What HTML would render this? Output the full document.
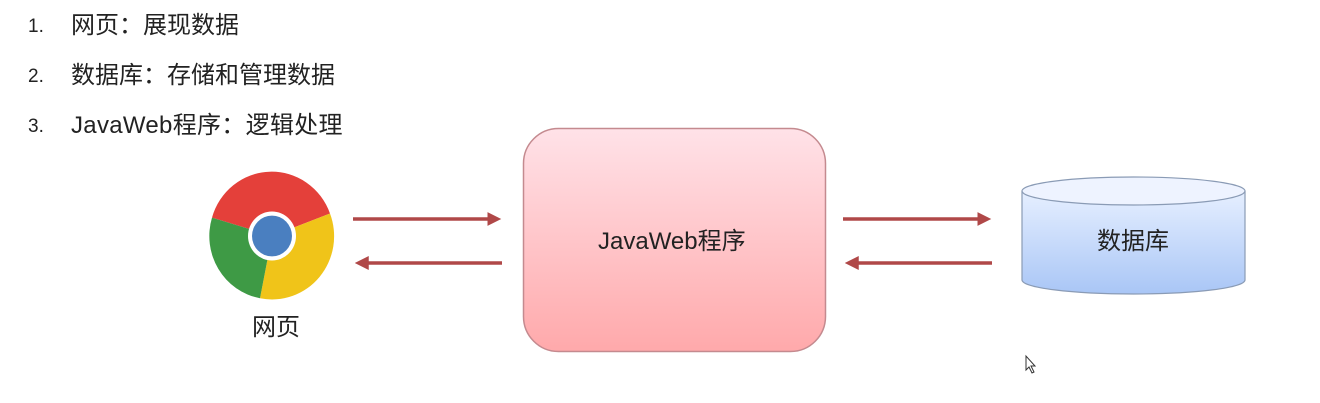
<!DOCTYPE html>
<html><head><meta charset="utf-8"><style>
body{margin:0;width:1320px;height:403px;background:#fff;overflow:hidden;position:relative;font-family:"Liberation Sans","Noto Sans CJK SC",sans-serif;color:#222}
.t{position:absolute;font-size:24px;line-height:28px;white-space:nowrap}
</style></head><body>
<div class="t" style="left:28px;top:13px;font-size:19px">1.</div>
<div class="t" style="left:71px;top:12px">网页：展现数据</div>
<div class="t" style="left:28px;top:63px;font-size:19px">2.</div>
<div class="t" style="left:71px;top:62px">数据库：存储和管理数据</div>
<div class="t" style="left:28px;top:113px;font-size:19px">3.</div>
<div class="t" style="left:71px;top:112px;letter-spacing:0.3px">JavaWeb程序：逻辑处理</div>
<svg width="1320" height="403" style="position:absolute;left:0;top:0">
<defs>
<linearGradient id="pk" x1="0" y1="0" x2="0" y2="1"><stop offset="0" stop-color="#ffe2e8"/><stop offset="1" stop-color="#ffa9ab"/></linearGradient>
<linearGradient id="bl" x1="0" y1="0" x2="0" y2="1"><stop offset="0" stop-color="#e6efff"/><stop offset="1" stop-color="#a9c6f6"/></linearGradient>
<marker id="ah" markerWidth="4" markerHeight="4" refX="2.5" refY="2" orient="auto"><path d="M0,0 L4,2 L0,4 z" fill="#b04848"/></marker>
</defs>
<g transform="translate(272,236) scale(1,1.02)">
<path d="M0,0 L-60,-18 A62,62 0 0 1 58,-22 Z" fill="#e4403a"/>
<path d="M0,0 L58,-22 A62,62 0 0 1 -12,61 Z" fill="#f0c419"/>
<path d="M0,0 L-12,61 A62,62 0 0 1 -60,-18 Z" fill="#3e9a45"/>
<circle r="24" fill="#fff"/>
<circle r="20" fill="#4a7fc0"/>
</g>
<rect x="523.5" y="128.5" width="302" height="223" rx="35" fill="url(#pk)" stroke="#c48a8f" stroke-width="1.5"/>
<g stroke="#b04848" stroke-width="3.5" marker-end="url(#ah)">
<line x1="353" y1="219" x2="496" y2="219"/>
<line x1="502" y1="263" x2="360" y2="263"/>
<line x1="843" y1="219" x2="986" y2="219"/>
<line x1="992" y1="263" x2="850" y2="263"/>
</g>
<path d="M1022,191 L1022,280 A111.5,14 0 0 0 1245,280 L1245,191" fill="url(#bl)" stroke="#8a9bb5" stroke-width="1.2"/>
<ellipse cx="1133.5" cy="191" rx="111.5" ry="14" fill="#eef3ff" stroke="#8a9bb5" stroke-width="1.2"/>
<path d="M1026,356 L1026,370 L1029,367 L1032,373 L1034,372 L1031,366 L1035,366 Z" fill="#fff" stroke="#333" stroke-width="1"/>
</svg>
<div class="t" style="left:252px;top:314px">网页</div>
<div class="t" style="left:598px;top:228px">JavaWeb程序</div>
<div class="t" style="left:1097px;top:228px">数据库</div>
</body></html>
